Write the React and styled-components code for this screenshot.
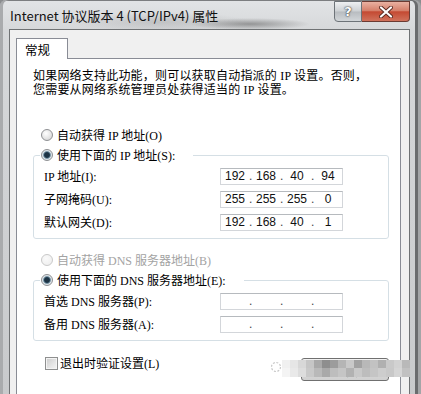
import React from "react";
import styled, { createGlobalStyle } from "styled-components";

const GlobalStyle = createGlobalStyle`
  html, body {
    margin: 0;
    padding: 0;
    background: #8a8c8e;
  }
  body {
    width: 421px;
    height: 394px;
    overflow: hidden;
  }
`;

const SANS = `"Noto Sans CJK SC", "Noto Sans", sans-serif`;
const SONG = `"Liberation Serif", "Noto Sans CJK SC", serif`;

const Window = styled.div`
  position: relative;
  width: 421px;
  height: 394px;
  box-sizing: border-box;
  display: flex;
  flex-direction: column;
  overflow: hidden;
  border-radius: 6px 6px 0 0;
  background: linear-gradient(180deg, #e2e4e6 0, #d6d8da 30px, #c8cacc 100%);
  box-shadow: inset 3px 0 0 #a9abad, inset -3px 0 0 #a3a5a7,
    inset -6px 0 0 #6a6c6e, inset 0 1px 0 #7c7e80;
`;

const TitleBar = styled.div`
  flex: none;
  height: 29px;
  display: flex;
  align-items: flex-start;
  justify-content: space-between;
  padding: 0 11px 0 10px;
  background: radial-gradient(60px 6px at 250px 24px, rgba(80, 80, 80, 0.5), transparent),
    radial-gradient(90px 10px at 160px 22px, rgba(120, 120, 120, 0.25), transparent);
`;

const Title = styled.div`
  font: 13px/18px ${SANS};
  color: #111;
  padding-top: 7px;
  white-space: nowrap;
`;

const Caption = styled.div`
  display: flex;
  margin-top: 1px;
`;

const CapButton = styled.div`
  height: 21px;
  box-sizing: border-box;
  display: flex;
  align-items: center;
  justify-content: center;
  width: ${(p) => (p.$close ? 48 : 28)}px;
  border: 1px solid ${(p) => (p.$close ? "#6b3b33" : "#6d7378")};
  border-left-width: ${(p) => (p.$close ? 0 : 1)}px;
  border-radius: ${(p) => (p.$close ? "0 0 4px 0" : "0 0 0 4px")};
  background: ${(p) =>
    p.$close
      ? "linear-gradient(180deg, #e9b1a2 0, #d5806b 45%, #c44a33 52%, #d0725c 100%)"
      : "linear-gradient(180deg, #eef0f2 0, #cdd1d4 48%, #b8bcc0 52%, #d2d6d9 100%)"};
  color: #fff;
  font: bold 13px/1 "DejaVu Sans", sans-serif;
  text-shadow: 0 0 2px #333, 0 0 1px #222;
`;

const Client = styled.div`
  flex: 1;
  min-height: 0;
  margin: 0 11px 0 9px;
  border: 1px solid #6f7274;
  border-bottom: none;
  background: #f0f0f0;
  padding: 8px 8px 0 6px;
  display: flex;
  flex-direction: column;
`;

const TabStrip = styled.div`
  display: flex;
`;

const Tab = styled.div`
  position: relative;
  z-index: 1;
  width: 52px;
  height: 21px;
  box-sizing: border-box;
  margin-bottom: -1px;
  padding-left: 8px;
  border: 1px solid #898c95;
  border-bottom: none;
  background: #fff;
  font: 12.5px/21px ${SANS};
  color: #000;
`;

const Panel = styled.div`
  flex: 1;
  background: #fff;
  border: 1px solid #898c95;
  border-bottom: none;
  padding: 10px 11px 0 16px;
  font: 12px ${SONG};
  color: #000;
  display: flex;
  flex-direction: column;
`;

const Intro = styled.div`
  line-height: 14px;
  white-space: nowrap;
  letter-spacing: 0.2px;
`;

const Option = styled.div`
  display: flex;
  align-items: center;
  gap: 4px;
  height: 20px;
  padding-left: ${(p) => (p.$inLegend ? 0 : 8)}px;
  margin-top: ${(p) => p.$mt || 0}px;
  color: ${(p) => (p.$disabled ? "#a3a3a3" : "#000")};
  white-space: nowrap;
`;

const Radio = styled.span`
  flex: none;
  width: 12px;
  height: 12px;
  box-sizing: border-box;
  border-radius: 50%;
  border: 1px solid ${(p) => (p.$disabled ? "#c9c9c9" : "#8e9093")};
  background: ${(p) =>
    p.$checked
      ? "radial-gradient(circle, #1d3344 0 2.4px, #587a8f 3.2px, #dbe3e8 4.3px, #f2f2f2 100%)"
      : p.$disabled
      ? "radial-gradient(circle at 40% 35%, #fafafa 0, #ececec 100%)"
      : "radial-gradient(circle at 40% 35%, #ffffff 0, #e2e2e2 60%, #cdcdcd 100%)"};
`;

const Group = styled.fieldset`
  margin: 0;
  padding: 2px 0 8px 0;
  min-width: 0;
  border: 1px solid #d5dfe5;
  border-radius: 3px;
`;

const Legend = styled.legend`
  margin-left: 6px;
  padding: 0 18px 0 1px;
`;

const Field = styled.div`
  display: grid;
  grid-template-columns: 176px 123px;
  align-items: center;
  height: 17px;
  padding-left: 10px;
  white-space: nowrap;

  & + & {
    margin-top: 6px;
  }
`;

const IpBox = styled.div`
  display: grid;
  grid-template-columns: 28px 3px 28px 3px 28px 3px 28px;
  height: 17px;
  box-sizing: border-box;
  border: 1px solid #d3d6da;
  border-top-color: #b6babe;
  background: #fff;
  font: 12px/15px "Liberation Sans", sans-serif;
  color: #111;
  text-align: center;
`;

const Dot = styled.span`
  color: #444;
`;

const Footer = styled.div`
  display: flex;
  justify-content: space-between;
  align-items: flex-start;
  margin-top: 12px;
`;

const Check = styled.div`
  display: flex;
  align-items: center;
  gap: 2px;
  height: 20px;
  padding-left: 12px;
`;

const CheckBox = styled.span`
  width: 13px;
  height: 13px;
  box-sizing: border-box;
  border: 1px solid #8e8f8f;
  box-shadow: inset 0 0 0 1px #f4f4f4;
  background: linear-gradient(135deg, #cbcbcb 0, #e6e6e6 60%, #f4f4f4 100%);
`;

const Button = styled.div`
  width: 88px;
  height: 23px;
  margin-top: 5px;
  box-sizing: border-box;
  border: 1px solid #707070;
  border-radius: 3px;
  background: linear-gradient(180deg, #f2f2f2 0, #ebebeb 49%, #dddddd 51%, #cfcfcf 100%);
  font: 12px/21px ${SANS};
  text-align: center;
`;

const Mosaic = styled.div`
  position: absolute;
  left: 282px;
  top: 360px;
  display: grid;
  grid-template-columns: repeat(16, 8px);
  grid-template-rows: 8px 9px;
`;

const Tile = styled.span`
  background: ${(p) => p.$c};
`;

const Mark = styled.svg`
  position: absolute;
  left: 270px;
  top: 361px;
`;

const mosaic = [
  "#f0f0f0", "#e6e6e6", "#d8d8d8", "#c6c6c6", "#a9a9a9", "#8e8e8e", "#9c9c9c", "#b5b5b5",
  "#c9c9c9", "#a2a2a2", "#b8b8b8", "#c2c2c2", "#b0b0b0", "#c9c9c9", "#d2d2d2", "#b9b9b9",
  "#f4f4f4", "#e9e9e9", "#dddddd", "#c9c9c9", "#b9b9b9", "#a9a9a9", "#bdbdbd", "#c5c5c5",
  "#b2b2b2", "#c9c9c9", "#bdbdbd", "#c5c5c5", "#cdcdcd", "#c8c8c8", "#d5d5d5", "#c1c1c1",
];

function Ip({ parts }) {
  return (
    <IpBox>
      <span>{parts[0]}</span>
      <Dot>.</Dot>
      <span>{parts[1]}</span>
      <Dot>.</Dot>
      <span>{parts[2]}</span>
      <Dot>.</Dot>
      <span>{parts[3]}</span>
    </IpBox>
  );
}

export default function App() {
  return (
    <>
      <GlobalStyle />
      <Window>
        <TitleBar>
          <Title>Internet 协议版本 4 (TCP/IPv4) 属性</Title>
          <Caption>
            <CapButton>?</CapButton>
            <CapButton $close>
              <svg width="14" height="12" viewBox="0 0 14 12">
                <path d="M2 1.5 L12 10.5 M12 1.5 L2 10.5" stroke="#5a2a22" strokeWidth="4" strokeLinecap="round" />
                <path d="M2 1.5 L12 10.5 M12 1.5 L2 10.5" stroke="#fff" strokeWidth="2.2" strokeLinecap="round" />
              </svg>
            </CapButton>
          </Caption>
        </TitleBar>

        <Client>
          <TabStrip>
            <Tab>常规</Tab>
          </TabStrip>
          <Panel>
            <Intro>
              如果网络支持此功能，则可以获取自动指派的 IP 设置。否则，
              <br />
              您需要从网络系统管理员处获得适当的 IP 设置。
            </Intro>

            <Option $mt={28}>
              <Radio />
              自动获得 IP 地址(O)
            </Option>
            <Group>
              <Legend>
                <Option $inLegend>
                  <Radio $checked />
                  使用下面的 IP 地址(S):
                </Option>
              </Legend>
              <Field>
                <span>IP 地址(I):</span>
                <Ip parts={["192", "168", "40", "94"]} />
              </Field>
              <Field>
                <span>子网掩码(U):</span>
                <Ip parts={["255", "255", "255", "0"]} />
              </Field>
              <Field>
                <span>默认网关(D):</span>
                <Ip parts={["192", "168", "40", "1"]} />
              </Field>
            </Group>

            <Option $mt={11} $disabled>
              <Radio $disabled />
              自动获得 DNS 服务器地址(B)
            </Option>
            <Group>
              <Legend>
                <Option $inLegend>
                  <Radio $checked />
                  使用下面的 DNS 服务器地址(E):
                </Option>
              </Legend>
              <Field>
                <span>首选 DNS 服务器(P):</span>
                <Ip parts={["", "", "", ""]} />
              </Field>
              <Field>
                <span>备用 DNS 服务器(A):</span>
                <Ip parts={["", "", "", ""]} />
              </Field>
            </Group>

            <Footer>
              <Check>
                <CheckBox />
                退出时验证设置(L)
              </Check>
              <Button>高级(V)...</Button>
            </Footer>
          </Panel>
        </Client>

        <Mark width="12" height="12" viewBox="0 0 12 12">
          <circle cx="6" cy="6" r="4.5" fill="none" stroke="#c8c8c8" strokeWidth="1.2" strokeDasharray="2 1.5" />
        </Mark>
        <Mosaic>
          {mosaic.map((c, i) => (
            <Tile key={i} $c={c} />
          ))}
        </Mosaic>
      </Window>
    </>
  );
}
